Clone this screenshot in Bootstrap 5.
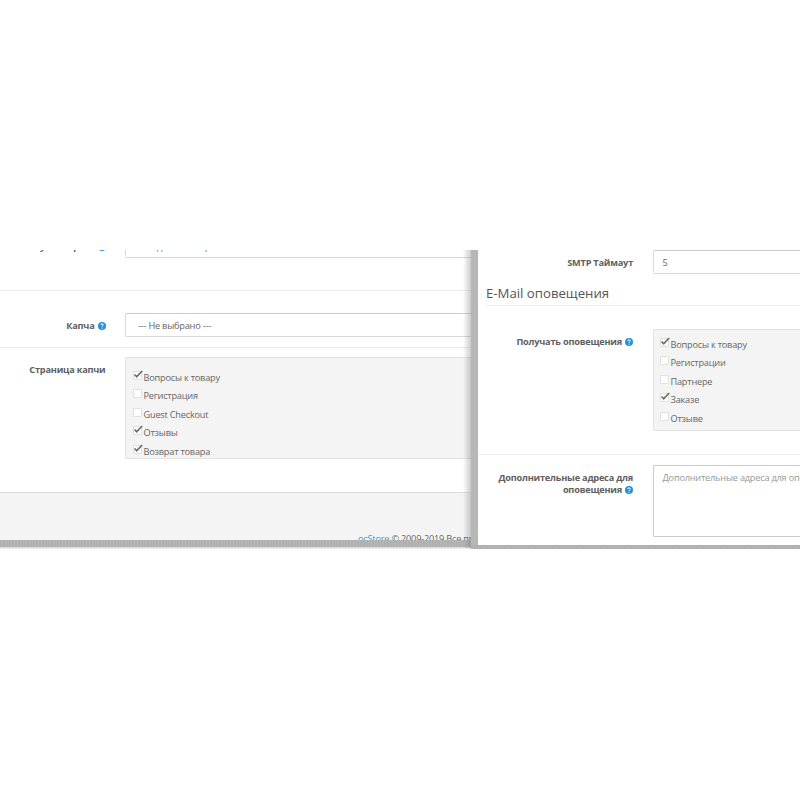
<!DOCTYPE html>
<html lang="ru">
<head>
<meta charset="utf-8">
<title>Настройки магазина</title>
<link href="https://cdn.jsdelivr.net/npm/bootstrap@5.3.0/dist/css/bootstrap.min.css" rel="stylesheet">
<style>
body{font-family:"Open Sans",sans-serif;font-size:9.2px;letter-spacing:-.21px;line-height:12px;color:#666;background:#fff;overflow:hidden}
.stage{margin-top:250px;height:299px;width:800px}
.pane-left{width:471px;height:299px}
.pane-left .shade{right:0;top:0;width:8px;height:298px;background:linear-gradient(90deg,rgba(120,120,120,0),rgba(120,120,120,.38))}
.pane-body{height:290px}
.edge{height:7px;background:repeating-linear-gradient(90deg,#b0b0b0 0 2px,#b7b7b7 2px 3px)}
.edge-fade{height:2px;background:linear-gradient(#d4d4d4,#f4f4f4)}
.pane-right{width:329px;height:299px;border-left:7px solid #b7b7b7;flex:none}
.pane-right .pane-body{height:295px}
.pane-right .edge{height:4px;margin-left:-7px}
.line{border-bottom:1px solid #ededed}
.lbl{font-weight:700;text-align:right;flex:none;color:#606060}
.pane-left .lbl{width:105.500px;margin-right:19.500px}
.pane-right .lbl{width:155px;margin-right:19.500px}
.field{border:1px solid #d8d8d8;border-top-color:#ccc;border-radius:2px 0 0 2px;border-right:0;height:24px;padding:6px 0 0 12px;flex:1;min-width:0;white-space:nowrap;background:#fff}
.pane-right .field{padding-left:9px}
.well-box{background:#f4f4f4;border:1px solid #e2e2e2;border-right:0;border-radius:2px 0 0 2px;flex:1;min-width:0}
.opt{height:18.4px;color:#666;white-space:nowrap}
.opt .cap{padding-top:5px}
.box{width:9px;height:9px;border:1px solid #e0e0e0;background:#fff;border-radius:1px;flex:none;margin-right:2px}
.box svg{display:block;overflow:visible;width:10px;height:9px;margin:-2px 0 0 -1px}
.help{width:8px;height:8px;display:inline-block;vertical-align:-1px;margin-left:3px}
.row-cut{height:41px}
.row-cut .field{margin-top:-16px}
.row-cut .lbl{margin-top:-9px}
.row-captcha{height:57px;padding-top:22px}
.row-captcha .lbl,.row-smtp .lbl{padding-top:7px}
.row-pages{height:144px;padding-top:9px}
.row-pages .lbl{padding-top:7px}
.row-pages .well-box{height:102px;padding:9px 0 0 6.500px}
.foot{height:48px;border-top:1px solid #ddd;background:#f4f4f4;padding:40px 0 0 358px;white-space:nowrap}
.foot a{color:#3d9bd6}
.row-smtp{height:32px}
.heading{font-size:13.2px;letter-spacing:0;line-height:18px;font-weight:400;color:#555;height:24px;margin:0 0 0 8px;padding-top:2px;border-bottom:1px solid #ededed}
.row-mail{height:149px;padding-top:23px}
.row-mail .lbl{padding-top:7px}
.row-mail .well-box{height:102px;padding:4px 0 0 6px}
.row-extra{padding-top:10px}
.row-extra .lbl{padding-top:7px;}
.row-extra .field{height:72px;color:#999;border-color:#ccc}
</style>
<script src="https://cdn.jsdelivr.net/npm/bootstrap@5.3.0/dist/js/bootstrap.bundle.min.js"></script>
</head>
<body>
<svg width="0" height="0" class="position-absolute">
<symbol id="q" viewBox="0 0 16 16"><circle cx="8" cy="8" r="8" fill="#2492d4"/><path d="M5.4 6Q5.600 3.700 8 3.700Q10.600 3.700 10.600 5.900Q10.600 7 9.300 7.800Q8 8.500 8 9.800" fill="none" stroke="#fff" stroke-width="1.900"/><circle cx="8" cy="12.200" r="1.200" fill="#fff"/></symbol>
<symbol id="c" viewBox="0 0 10 9"><path d="M1.500 4.500L3.700 6.700L9.200 1" fill="none" stroke="#707070" stroke-width="1.700"/></symbol>
</svg>
<main class="stage d-flex overflow-hidden">
<section class="pane-left position-relative overflow-hidden flex-shrink-0">
<div class="pane-body overflow-hidden">
<div class="row-cut line d-flex"><div class="lbl">Статус возврата<svg class="help"><use href="#q"/></svg></div><div class="field">Ожидание товара</div></div>
<div class="row-captcha line d-flex"><div class="lbl">Капча<svg class="help"><use href="#q"/></svg></div><div class="field">--- Не выбрано ---</div></div>
<div class="row-pages d-flex"><div class="lbl">Страница капчи</div>
<div class="well-box">
<div class="opt d-flex"><span class="box mt-1"><svg><use href="#c"/></svg></span><span class="cap">Вопросы к товару</span></div>
<div class="opt d-flex"><span class="box mt-1"></span><span class="cap">Регистрация</span></div>
<div class="opt d-flex"><span class="box mt-1"></span><span class="cap">Guest Checkout</span></div>
<div class="opt d-flex"><span class="box mt-1"><svg><use href="#c"/></svg></span><span class="cap">Отзывы</span></div>
<div class="opt d-flex"><span class="box mt-1"><svg><use href="#c"/></svg></span><span class="cap">Возврат товара</span></div>
</div></div>
<footer class="foot"><a href="#" class="text-decoration-none">ocStore</a> © 2009-2019 Все права защищены.</footer>
</div>
<div class="edge"></div><div class="edge-fade"></div>
<div class="shade position-absolute"></div>
</section>
<section class="pane-right">
<div class="pane-body overflow-hidden">
<div class="row-smtp d-flex"><div class="lbl">SMTP Таймаут</div><div class="field">5</div></div>
<h2 class="heading">E-Mail оповещения</h2>
<div class="row-mail line d-flex"><div class="lbl">Получать оповещения<svg class="help"><use href="#q"/></svg></div>
<div class="well-box">
<div class="opt d-flex"><span class="box mt-1"><svg><use href="#c"/></svg></span><span class="cap">Вопросы к товару</span></div>
<div class="opt d-flex"><span class="box mt-1"></span><span class="cap">Регистрации</span></div>
<div class="opt d-flex"><span class="box mt-1"></span><span class="cap">Партнере</span></div>
<div class="opt d-flex"><span class="box mt-1"><svg><use href="#c"/></svg></span><span class="cap">Заказе</span></div>
<div class="opt d-flex"><span class="box mt-1"></span><span class="cap">Отзыве</span></div>
</div></div>
<div class="row-extra d-flex"><div class="lbl">Дополнительные адреса для оповещения<svg class="help"><use href="#q"/></svg></div><div class="field overflow-hidden">Дополнительные адреса для оповещения</div></div>
</div>
<div class="edge"></div>
</section>
</main>
</body>
</html>
